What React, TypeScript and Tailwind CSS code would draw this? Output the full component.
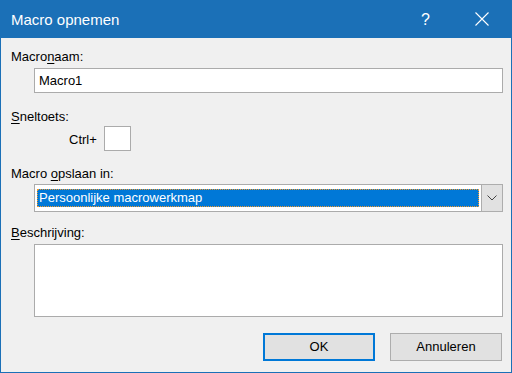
export default function App() {
  return (
    <div className="w-[512px] h-[373px] flex flex-col bg-[#f0f0f0] text-black text-[13px] font-['Liberation_Sans',Arial,sans-serif]">
      {/* Title bar */}
      <div className="h-[38px] shrink-0 bg-[#1b70b7] text-white flex items-center pl-[11px]">
        <span className="text-[15px] leading-none pt-px">Macro opnemen</span>
        <span className="ml-auto text-[16px] leading-none w-[8px] mr-[46px] pt-px">?</span>
        <svg width="14" height="14" viewBox="0 0 14 14" className="mr-[23px]">
          <path d="M0.5 0.5 L13.5 13.5 M13.5 0.5 L0.5 13.5" stroke="#fff" strokeWidth="1.1" fill="none" />
        </svg>
      </div>

      {/* Body */}
      <div className="flex-1 flex flex-col border-x border-b border-[#1b70b7] pl-[10px] pr-[8px] pt-[11px] leading-[16px]">
        <div>
          Macro<span className="underline underline-offset-2">n</span>aam:
        </div>
        <div className="mt-[3px] ml-[23px] h-[25px] bg-white border border-[#ababab] flex items-center pl-[4px]">
          Macro1
        </div>

        <div className="mt-[16px]">
          <span className="underline underline-offset-2">S</span>neltoets:
        </div>
        <div className="mt-[1px] flex items-center">
          <span className="ml-[58px] pt-[2px]">Ctrl+</span>
          <div className="ml-[7px] w-[27px] h-[25px] bg-white border border-[#ababab]" />
        </div>

        <div className="mt-[15px]">
          Macro <span className="underline underline-offset-2">o</span>pslaan in:
        </div>
        <div className="mt-[2px] ml-[23px] h-[28px] bg-white border border-[#ababab] flex items-center pl-[2px]">
          <div className="flex-1 h-[18px] bg-[#0078d7] text-white border border-dotted border-[#f39a2c] flex items-center pl-px mr-[2px]">
            Persoonlijke macrowerkmap
          </div>
          <div className="self-stretch -my-px -mr-px w-[22px] bg-[#e1e1e1] border border-[#adadad] flex items-center justify-center">
            <svg width="10" height="6" viewBox="0 0 10 6">
              <path d="M0.5 0.5 L5 5 L9.5 0.5" stroke="#444" strokeWidth="1" fill="none" />
            </svg>
          </div>
        </div>

        <div className="mt-[13px]">
          <span className="underline underline-offset-2">B</span>eschrijving:
        </div>
        <div className="mt-[3px] ml-[23px] h-[73px] bg-white border border-[#ababab]" />

        <div className="mt-[16px] flex justify-end gap-[15px] mr-px">
          <button className="w-[112px] h-[28px] bg-[#e1e1e1] border-2 border-[#0078d7] text-[13px]">OK</button>
          <button className="w-[112px] h-[28px] bg-[#e1e1e1] border border-[#adadad] text-[13px]">Annuleren</button>
        </div>
      </div>
    </div>
  );
}
